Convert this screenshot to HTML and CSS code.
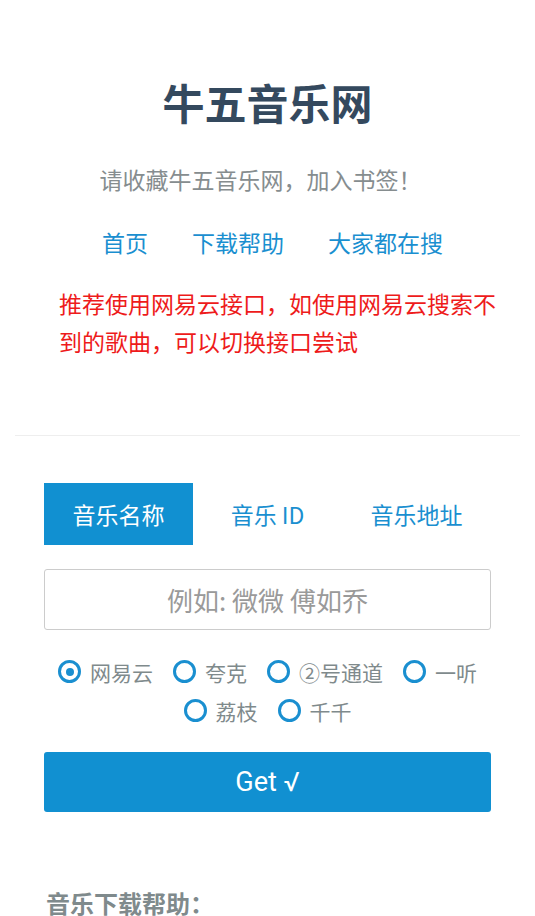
FILE: index.html
```html
<!DOCTYPE html>
<html lang="zh-CN">
<head>
<meta charset="utf-8">
<title>牛五音乐网</title>
<link rel="stylesheet" href="styles.css">
</head>
<body>
<div class="page">
  <header class="header">
    <h1 class="title">牛五音乐网</h1>
    <p class="subtitle">请收藏牛五音乐网，加入书签！</p>
    <nav class="nav">
      <a href="#">首页</a>
      <a href="#">下载帮助</a>
      <a href="#">大家都在搜</a>
    </nav>
    <p class="notice">推荐使用网易云接口，如使用网易云搜索不到的歌曲，可以切换接口尝试</p>
  </header>
  <hr class="divider">
  <section class="form">
    <div class="tabs">
      <div class="tab active">音乐名称</div>
      <div class="tab">音乐 ID</div>
      <div class="tab">音乐地址</div>
    </div>
    <input class="search" type="text" placeholder="例如: 微微 傅如乔">
    <div class="radios">
      <label class="radio checked"><span class="dot"></span>网易云</label>
      <label class="radio"><span class="dot"></span>夸克</label>
      <label class="radio"><span class="dot"></span>②号通道</label>
      <label class="radio"><span class="dot"></span>一听</label>
      <label class="radio"><span class="dot"></span>荔枝</label>
      <label class="radio"><span class="dot"></span>千千</label>
    </div>
    <button class="get">Get √</button>
  </section>
  <h3 class="help">音乐下载帮助：</h3>
</div>
</body>
</html>
```

FILE: styles.css
```css
* { box-sizing: border-box; }
html, body { margin: 0; padding: 0; background: #fff; }
body {
  font-family: "Noto Sans CJK SC", "Noto Sans", Roboto, sans-serif;
  overflow: hidden;
}
.page { padding: 0 15px; }
.header { text-align: center; padding-top: 72px; }
.title {
  margin: 0;
  font-size: 42px;
  line-height: 60px;
  font-weight: 700;
  color: #34495e;
}
.subtitle {
  margin: 30px 0 0;
  font-size: 23px;
  line-height: 34px;
  color: #868d8f;
  padding-right: 14px;
}
.nav {
  display: flex;
  justify-content: center;
  gap: 44px;
  margin-top: 28px;
  padding-left: 10px;
}
.nav a {
  font-size: 23px;
  line-height: 36px;
  color: #1a8fd0;
  text-decoration: none;
}
.notice {
  margin: 24px 0 0;
  padding: 0 0 0 44px;
  text-align: left;
  font-size: 23px;
  line-height: 38px;
  color: #ee1b1b;
  width: 494px;
}
.divider {
  border: 0;
  border-top: 1px solid #eeeeee;
  margin: 75px 0 0;
}
.form { padding: 47px 29px 0; }
.tabs { display: flex; }
.tab {
  flex: 1;
  height: 62px;
  display: flex;
  align-items: center;
  justify-content: center;
  font-size: 23px;
  color: #1a8fd0;
}
.tab.active { background: #1190d1; color: #fff; }
.search {
  display: block;
  width: 100%;
  height: 61px;
  margin-top: 24px;
  border: 1px solid #cccccc;
  border-radius: 3px;
  text-align: center;
  font-family: inherit;
  font-size: 26px;
  color: #555;
  outline: none;
}
.search::placeholder { color: #9a9a9a; }
.radios {
  display: flex;
  flex-wrap: wrap;
  justify-content: center;
  column-gap: 20px;
  margin-top: 22px;
}
.radio {
  display: flex;
  align-items: center;
  height: 39px;
  font-size: 21px;
  color: #7f8a8c;
}
.dot {
  width: 23px;
  height: 23px;
  border: 3px solid #1a8fd0;
  border-radius: 50%;
  margin-right: 9px;
  display: flex;
  align-items: center;
  justify-content: center;
}
.radio.checked .dot::after {
  content: "";
  width: 8px;
  height: 8px;
  border-radius: 50%;
  background: #1a8fd0;
}
.get {
  display: block;
  width: 100%;
  height: 60px;
  margin-top: 22px;
  border: 0;
  border-radius: 3px;
  background: #1190d1;
  color: #fff;
  font-family: Roboto, sans-serif;
  font-size: 27px;
}
.help {
  margin: 76px 0 0 31px;
  font-size: 24px;
  line-height: 30px;
  font-weight: 700;
  color: #7f8a8c;
}
```
